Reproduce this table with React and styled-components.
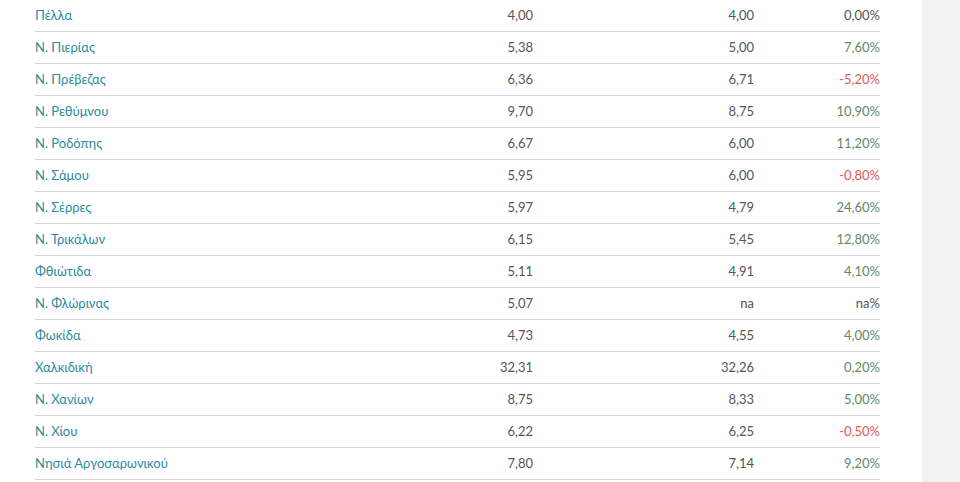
import React from "react";
import styled, { createGlobalStyle } from "styled-components";

const Global = createGlobalStyle`
  html, body { margin: 0; padding: 0; height: 100%; background: #fff; }
  #root { height: 100%; }
  body { font-family: Lato, "Noto Sans", sans-serif; }
`;

const Page = styled.div`
  display: flex;
  height: 100%;
  overflow: hidden;
`;

const Main = styled.main`
  width: 922px;
  flex: none;
  padding-left: 35px;
  box-sizing: border-box;
`;

const Aside = styled.aside`
  flex: 1;
  background: #f2f2f2;
`;

const Table = styled.div`
  width: 845px;
  display: flex;
  flex-direction: column;
`;

const Row = styled.div`
  display: grid;
  grid-template-columns: 1fr 120px 221px 126px;
  height: 31px;
  align-items: center;
  border-bottom: 1px solid #d6d6d6;
  font-size: 13px;
`;

const Name = styled.a`
  color: #2a8b9d;
  text-decoration: none;
  padding-bottom: 1px;
`;

const Num = styled.span`
  text-align: right;
  color: #555;
  padding-bottom: 1px;
`;

const Pct = styled(Num)`
  color: ${(p) =>
    p.$tone === "up" ? "#5b8c67" : p.$tone === "down" ? "#de5a5a" : "#555"};
`;

const rows = [
  ["Πέλλα", "4,00", "4,00", "0,00%", "flat"],
  ["Ν. Πιερίας", "5,38", "5,00", "7,60%", "up"],
  ["Ν. Πρέβεζας", "6,36", "6,71", "-5,20%", "down"],
  ["Ν. Ρεθύμνου", "9,70", "8,75", "10,90%", "up"],
  ["Ν. Ροδόπης", "6,67", "6,00", "11,20%", "up"],
  ["Ν. Σάμου", "5,95", "6,00", "-0,80%", "down"],
  ["Ν. Σέρρες", "5,97", "4,79", "24,60%", "up"],
  ["Ν. Τρικάλων", "6,15", "5,45", "12,80%", "up"],
  ["Φθιώτιδα", "5,11", "4,91", "4,10%", "up"],
  ["Ν. Φλώρινας", "5,07", "na", "na%", "flat"],
  ["Φωκίδα", "4,73", "4,55", "4,00%", "up"],
  ["Χαλκιδική", "32,31", "32,26", "0,20%", "up"],
  ["Ν. Χανίων", "8,75", "8,33", "5,00%", "up"],
  ["Ν. Χίου", "6,22", "6,25", "-0,50%", "down"],
  ["Νησιά Αργοσαρωνικού", "7,80", "7,14", "9,20%", "up"],
];

export default function App() {
  return (
    <>
      <Global />
      <Page>
        <Main>
          <Table>
            {rows.map(([n, a, b, c, t]) => (
              <Row key={n}>
                <Name href="#">{n}</Name>
                <Num>{a}</Num>
                <Num>{b}</Num>
                <Pct $tone={t}>{c}</Pct>
              </Row>
            ))}
          </Table>
        </Main>
        <Aside />
      </Page>
    </>
  );
}
